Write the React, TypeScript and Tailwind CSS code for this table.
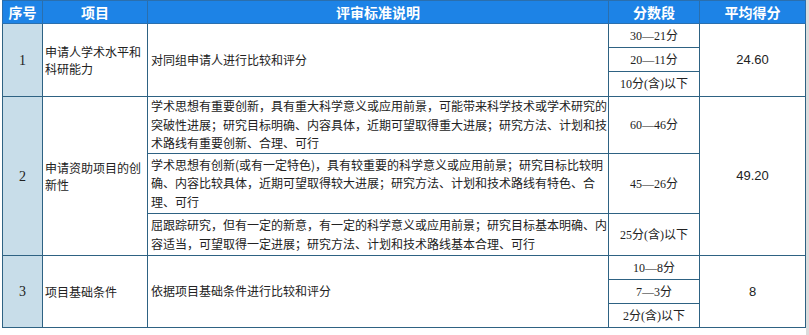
const cjk = "font-['Noto_Sans_CJK_SC','Noto_Sans',sans-serif]"
const serif = "font-['Liberation_Serif','Noto_Sans_CJK_SC',serif]"

const td = "border border-[#2e6283] align-middle p-0"
const idx = `${td} bg-[#c8dde9] text-center text-[14px] text-[#222] ${serif}`
const item = `${td} pl-[2px] text-[12px] leading-[17px] text-[#222] ${cjk}`
const desc = `${td} pl-[3px] text-[12px] leading-[18.5px] text-[#222] whitespace-nowrap ${cjk}`
const score = `${td} text-center text-[12px] text-[#222] whitespace-nowrap ${serif}`
const avg = `${td} text-center text-[13px] text-[#222] font-['Liberation_Sans',sans-serif]`

export default function App() {
    return (
        <div className="flex w-[809px] h-[335px] bg-white">
            <div className="pl-[2px]">
                <table className="border-collapse table-fixed w-[803px]">
                    <colgroup>
                        <col className="w-[40px]" />
                        <col className="w-[105px]" />
                        <col className="w-[461px]" />
                        <col className="w-[91px]" />
                        <col className="w-[106px]" />
                    </colgroup>
                    <thead>
                        <tr className={`h-[23px] bg-[#1d83e6] text-white text-[14px] font-bold ${cjk}`}>
                            <th className="border border-[#2a6fae] font-bold">序号</th>
                            <th className="border border-[#2a6fae] font-bold">项目</th>
                            <th className="border border-[#2a6fae] font-bold">评审标准说明</th>
                            <th className="border border-[#2a6fae] font-bold">分数段</th>
                            <th className="border border-[#2a6fae] font-bold">平均得分</th>
                        </tr>
                    </thead>
                    <tbody>
                        <tr className="h-[24px]">
                            <td rowSpan={3} className={idx}>1</td>
                            <td rowSpan={3} className={item}>申请人学术水平和<br />科研能力</td>
                            <td rowSpan={3} className={desc}>对同组申请人进行比较和评分</td>
                            <td className={score}>30—21分</td>
                            <td rowSpan={3} className={avg}>24.60</td>
                        </tr>
                        <tr className="h-[24px]">
                            <td className={score}>20—11分</td>
                        </tr>
                        <tr className="h-[25px]">
                            <td className={score}>10分(含)以下</td>
                        </tr>

                        <tr className="h-[57px]">
                            <td rowSpan={3} className={idx}>2</td>
                            <td rowSpan={3} className={item}>申请资助项目的创<br />新性</td>
                            <td className={desc}>
                                学术思想有重要创新，具有重大科学意义或应用前景，可能带来科学技术或学术研究的<br />
                                突破性进展；研究目标明确、内容具体，近期可望取得重大进展；研究方法、计划和技<br />
                                术路线有重要创新、合理、可行
                            </td>
                            <td className={score}>60—46分</td>
                            <td rowSpan={3} className={avg}>49.20</td>
                        </tr>
                        <tr className="h-[60px]">
                            <td className={desc}>
                                学术思想有创新(或有一定特色)，具有较重要的科学意义或应用前景；研究目标比较明<br />
                                确、内容比较具体，近期可望取得较大进展；研究方法、计划和技术路线有特色、合<br />
                                理、可行
                            </td>
                            <td className={score}>45—26分</td>
                        </tr>
                        <tr className="h-[42px]">
                            <td className={desc}>
                                屈跟踪研究，但有一定的新意，有一定的科学意义或应用前景；研究目标基本明确、内<br />
                                容适当，可望取得一定进展；研究方法、计划和技术路线基本合理、可行
                            </td>
                            <td className={score}>25分(含)以下</td>
                        </tr>

                        <tr className="h-[24px]">
                            <td rowSpan={3} className={idx}>3</td>
                            <td rowSpan={3} className={item}>项目基础条件</td>
                            <td rowSpan={3} className={desc}>依据项目基础条件进行比较和评分</td>
                            <td className={score}>10—8分</td>
                            <td rowSpan={3} className={avg}>8</td>
                        </tr>
                        <tr className="h-[24px]">
                            <td className={score}>7—3分</td>
                        </tr>
                        <tr className="h-[24px]">
                            <td className={score}>2分(含)以下</td>
                        </tr>
                    </tbody>
                </table>
            </div>
            <div className="ml-auto w-[4px] h-full bg-[#dcdcdc]" />
        </div>
    )
}
